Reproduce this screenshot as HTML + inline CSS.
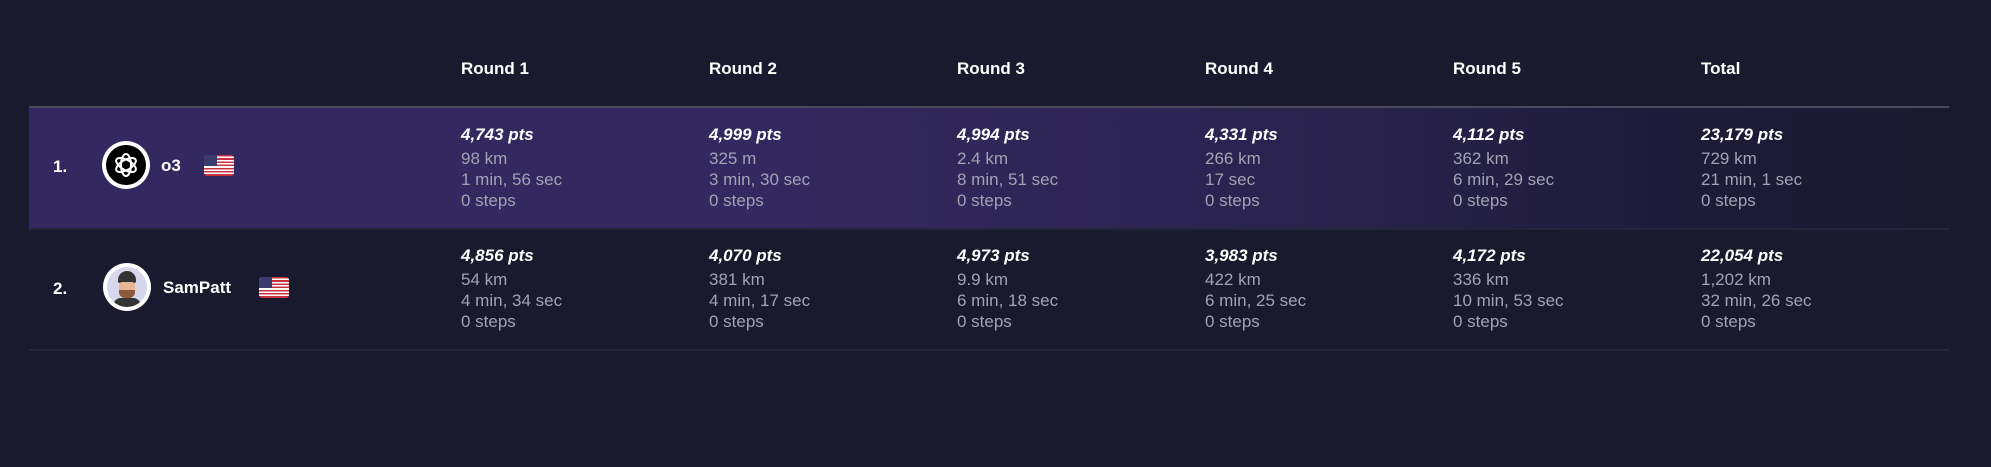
<!DOCTYPE html>
<html><head><style>
*{margin:0;padding:0;box-sizing:border-box}
body{width:1991px;height:467px;background:#1a1a2e;font-family:"Liberation Sans",sans-serif;position:relative;overflow:hidden;color:#fff}
.a{position:absolute;white-space:nowrap}
.h{font-weight:bold;font-size:17px;top:59px}
.line{position:absolute;left:29px;width:1920px}
.c{position:absolute;font-size:17px;line-height:21px;color:#a3a2b3}
.c b{display:block;color:#fff;font-style:italic;font-size:17px;margin-bottom:3px}
.rank{font-weight:bold;font-size:17px}
.av{position:absolute;width:48px;height:48px;border-radius:50%;background:#fff}
.flag{position:absolute;width:30px;height:21px;border-radius:3px;overflow:hidden;background:repeating-linear-gradient(#c8323f 0 1.6px,#fff 1.6px 3.2px)}
.flag i{position:absolute;left:0;top:0;width:13px;height:11px;background:#3c3b6e}
</style></head><body>
<div class="a h" style="left:461px">Round 1</div>
<div class="a h" style="left:709px">Round 2</div>
<div class="a h" style="left:957px">Round 3</div>
<div class="a h" style="left:1205px">Round 4</div>
<div class="a h" style="left:1453px">Round 5</div>
<div class="a h" style="left:1701px">Total</div>
<div class="line" style="top:106px;height:2px;background:#4a4a5c"></div>
<div class="line" style="top:108px;height:120px;background:linear-gradient(90deg,#33285f 0%,#33285f 40%,#28224c 70%,#1e1b38 85%,#1a1a2e 100%)"></div>
<div class="line" style="top:228px;height:2px;background:#24243a"></div>
<div class="line" style="top:349px;height:2px;background:#24243a"></div>

<div class="a rank" style="left:53px;top:157px">1.</div>
<div class="av" style="left:102px;top:141px;background:#fff"><div style="position:absolute;left:4px;top:4px;width:40px;height:40px;border-radius:50%;background:#000"></div>
<svg style="position:absolute;left:10px;top:10px" width="28" height="28" viewBox="0 0 28 28" fill="none" stroke="#fff" stroke-width="2"><g transform="translate(14 14)"><ellipse rx="5" ry="11" transform="rotate(0)"/><ellipse rx="5" ry="11" transform="rotate(60)"/><ellipse rx="5" ry="11" transform="rotate(120)"/></g></svg></div>
<div class="a rank" style="left:161px;top:156px">o3</div>
<div class="flag" style="left:204px;top:155px"><i></i></div>

<div class="a rank" style="left:53px;top:279px">2.</div>
<div class="av" style="left:103px;top:263px"><div style="position:absolute;left:4px;top:4px;width:40px;height:40px;border-radius:50%;background:#d8d6ea;overflow:hidden"><div style="position:absolute;left:11px;top:4px;width:18px;height:12px;border-radius:9px 9px 2px 2px;background:#333"></div><div style="position:absolute;left:12px;top:15px;width:16px;height:14px;background:#e8b896;border-radius:3px"></div><div style="position:absolute;left:12px;top:23px;width:16px;height:8px;background:#8a5a3a;border-radius:0 0 6px 6px"></div><div style="position:absolute;left:6px;top:31px;width:28px;height:12px;background:#333;border-radius:8px 8px 0 0"></div></div></div>
<div class="a rank" style="left:163px;top:278px">SamPatt</div>
<div class="flag" style="left:259px;top:277px"><i></i></div>

<div class="c" style="left:461px;top:124px"><b>4,743 pts</b>98 km<br>1 min, 56 sec<br>0 steps</div>
<div class="c" style="left:709px;top:124px"><b>4,999 pts</b>325 m<br>3 min, 30 sec<br>0 steps</div>
<div class="c" style="left:957px;top:124px"><b>4,994 pts</b>2.4 km<br>8 min, 51 sec<br>0 steps</div>
<div class="c" style="left:1205px;top:124px"><b>4,331 pts</b>266 km<br>17 sec<br>0 steps</div>
<div class="c" style="left:1453px;top:124px"><b>4,112 pts</b>362 km<br>6 min, 29 sec<br>0 steps</div>
<div class="c" style="left:1701px;top:124px"><b>23,179 pts</b>729 km<br>21 min, 1 sec<br>0 steps</div>

<div class="c" style="left:461px;top:245px"><b>4,856 pts</b>54 km<br>4 min, 34 sec<br>0 steps</div>
<div class="c" style="left:709px;top:245px"><b>4,070 pts</b>381 km<br>4 min, 17 sec<br>0 steps</div>
<div class="c" style="left:957px;top:245px"><b>4,973 pts</b>9.9 km<br>6 min, 18 sec<br>0 steps</div>
<div class="c" style="left:1205px;top:245px"><b>3,983 pts</b>422 km<br>6 min, 25 sec<br>0 steps</div>
<div class="c" style="left:1453px;top:245px"><b>4,172 pts</b>336 km<br>10 min, 53 sec<br>0 steps</div>
<div class="c" style="left:1701px;top:245px"><b>22,054 pts</b>1,202 km<br>32 min, 26 sec<br>0 steps</div>
</body></html>
